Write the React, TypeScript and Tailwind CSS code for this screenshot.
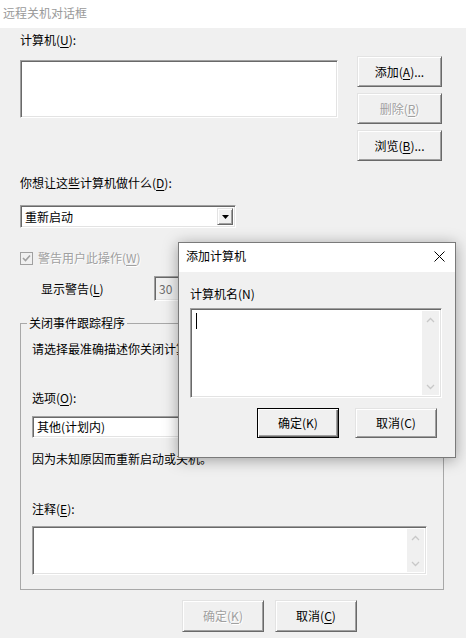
import React from 'react';

const raised =
  'border border-t-[#e3e3e3] border-l-[#e3e3e3] border-r-[#696969] border-b-[#696969] shadow-[inset_1px_1px_0_#ffffff,inset_-1px_-1px_0_#a0a0a0] bg-[#f0f0f0]';
const sunken =
  'border border-t-[#a0a0a0] border-l-[#a0a0a0] border-r-[#ffffff] border-b-[#ffffff] shadow-[inset_1px_1px_0_#696969,inset_-1px_-1px_0_#e3e3e3]';
const dimText = 'text-[#a0a0a0] [text-shadow:1px_1px_0_#ffffff]';

const Mn: React.FC<{ children: React.ReactNode }> = ({ children }) => (
  <span className="underline underline-offset-[2px] decoration-1">{children}</span>
);

const Btn: React.FC<{ children: React.ReactNode; className?: string; disabled?: boolean; primary?: boolean }> = ({
  children,
  className = '',
  disabled,
  primary,
}) => (
  <div
    className={`flex items-center justify-center ${
      primary
        ? 'border border-black bg-[#f0f0f0] shadow-[inset_1px_1px_0_#ffffff,inset_-1px_-1px_0_#696969,inset_-2px_-2px_0_#a0a0a0]'
        : raised
    } ${disabled ? dimText : 'text-black'} ${className}`}
  >
    {children}
  </div>
);

const Chevron: React.FC<{ down?: boolean }> = ({ down }) => (
  <svg width="9" height="6" viewBox="0 0 9 6">
    <path
      d={down ? 'M1 1 L4.5 4.5 L8 1' : 'M1 5 L4.5 1.5 L8 5'}
      fill="none"
      stroke="#c8c8c8"
      strokeWidth="1.3"
    />
  </svg>
);

const ScrollStrip: React.FC = () => (
  <div className="w-[17px] h-full bg-[#f0f0f0] flex flex-col justify-between">
    <div className="h-[17px] flex items-center justify-center">
      <Chevron />
    </div>
    <div className="h-[17px] flex items-center justify-center">
      <Chevron down />
    </div>
  </div>
);

const Select: React.FC<{ value: string; className?: string }> = ({ value, className = '' }) => (
  <div className={`bg-white flex p-[2px] ${sunken} ${className}`}>
    <div className="flex-1 pl-[2px] flex items-center">{value}</div>
    <div className={`w-[16px] h-full flex items-center justify-center ${raised}`}>
      <svg width="7" height="4" viewBox="0 0 7 4">
        <path d="M0 0 H7 L3.5 4 Z" fill="#000" />
      </svg>
    </div>
  </div>
);

const AddComputerDialog: React.FC = () => (
  <div className="absolute left-[178px] top-[242px] w-[278px] h-[216px] border border-[#7a7a7a] bg-[#f0f0f0] shadow-[0_2px_14px_rgba(0,0,0,0.35)] flex flex-col">
    <div className="h-[29px] bg-white flex items-start justify-between pl-[7px] pr-[10px] pt-[5px]">
      <span>添加计算机</span>
      <svg width="11" height="11" viewBox="0 0 11 11" className="mt-[3px]">
        <path d="M0.5 0.5 L10.5 10.5 M10.5 0.5 L0.5 10.5" stroke="#000" strokeWidth="1" />
      </svg>
    </div>
    <div className="pl-[11px]">
      <div className="mt-[14px]">计算机名(N)</div>
      <div className={`mt-[6px] w-[252px] h-[90px] bg-white p-[2px] flex ${sunken}`}>
        <div className="flex-1 pl-[3px] pt-[2px]">
          <div className="w-[1px] h-[16px] bg-black" />
        </div>
        <ScrollStrip />
      </div>
      <div className="mt-[10px] flex justify-end gap-[16px] pr-[18px]">
        <Btn primary className="w-[82px] h-[30px]">
          确定(K)
        </Btn>
        <Btn className="w-[82px] h-[30px]">取消(C)</Btn>
      </div>
    </div>
  </div>
);

const App: React.FC = () => {
  return (
    <div className="w-[466px] h-[638px] relative overflow-hidden bg-[#f0f0f0] text-[12px] leading-4 text-black font-['Noto_Sans_CJK_SC','Microsoft_YaHei',sans-serif]">
      <div className="h-[28px] bg-white pl-[3px] pt-[5px] text-[#9a9a9a]">远程关机对话框</div>

      <div className="pl-[20px]">
        <div className="flex mt-[4px]">
          <div className="flex flex-col">
            <div>
              计算机(<Mn>U</Mn>):
            </div>
            <div className={`mt-[12px] w-[318px] h-[58px] bg-white ${sunken}`} />
          </div>
          <div className="ml-[19px] mt-[24px] flex flex-col gap-[6px]">
            <Btn className="w-[85px] h-[31px]">
              添加(<Mn>A</Mn>)...
            </Btn>
            <Btn disabled className="w-[85px] h-[31px]">
              删除(<Mn>R</Mn>)
            </Btn>
            <Btn className="w-[85px] h-[31px]">
              浏览(<Mn>B</Mn>)...
            </Btn>
          </div>
        </div>

        <div className="mt-[14px]">
          你想让这些计算机做什么(<Mn>D</Mn>):
        </div>
        <Select value="重新启动" className="mt-[14px] w-[216px] h-[23px]" />

        <div className={`mt-[22px] flex items-center ${dimText}`}>
          <div className="w-[13px] h-[13px] border border-[#a0a0a0] bg-[#f0f0f0] flex items-center justify-center [text-shadow:none]">
            <svg width="9" height="8" viewBox="0 0 9 8">
              <path d="M1 4 L3.5 6.5 L8 1.5" fill="none" stroke="#a0a0a0" strokeWidth="1.6" />
            </svg>
          </div>
          <span className="ml-[5px]">
            警告用户此操作(<Mn>W</Mn>)
          </span>
        </div>

        <div className="mt-[10px] flex items-center h-[25px]">
          <div className="pl-[21px] w-[134px]">
            显示警告(<Mn>L</Mn>)
          </div>
          <div className={`w-[70px] h-[25px] bg-[#f0f0f0] pl-[4px] flex items-center text-[#6d6d6d] ${sunken}`}>30</div>
        </div>

        <fieldset className="mt-[14px] w-[424px] border border-[#a8a8a8] pb-[14px]">
          <legend className="ml-[6px] px-[2px]">关闭事件跟踪程序</legend>
          <div className="pl-[11px]">
            <div className="mt-[10px] whitespace-nowrap">请选择最准确描述你关闭计算机的原因</div>
            <div className="mt-[33px]">
              选项(<Mn>O</Mn>):
            </div>
            <Select value="其他(计划内)" className="mt-[10px] w-[395px] h-[22px]" />
            <div className="mt-[13px]">因为未知原因而重新启动或关机。</div>
            <div className="mt-[34px]">
              注释(<Mn>E</Mn>):
            </div>
            <div className={`mt-[9px] w-[395px] h-[49px] bg-white p-[2px] flex ${sunken}`}>
              <div className="flex-1" />
              <ScrollStrip />
            </div>
          </div>
        </fieldset>

        <div className="mt-[10px] ml-[162px] flex gap-[11px]">
          <Btn disabled className="w-[82px] h-[32px]">
            确定(<Mn>K</Mn>)
          </Btn>
          <Btn className="w-[82px] h-[32px]">
            取消(<Mn>C</Mn>)
          </Btn>
        </div>
      </div>

      <AddComputerDialog />
    </div>
  );
};

export default App;
